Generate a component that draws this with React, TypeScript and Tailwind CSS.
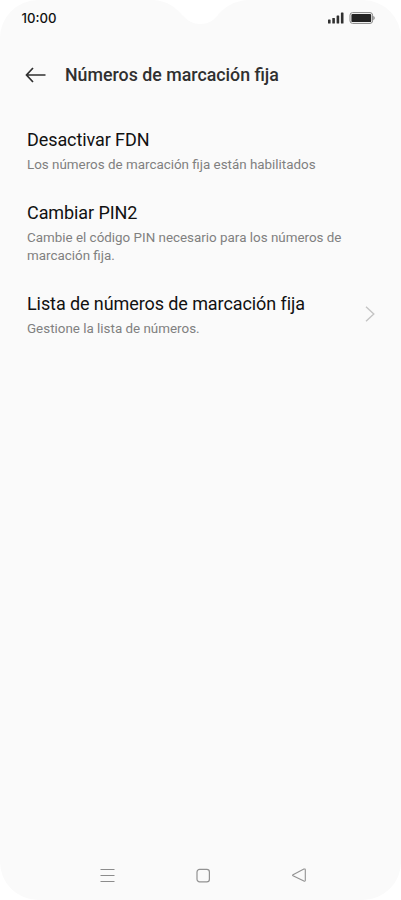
interface Setting {
  title: string;
  description: string;
  hasArrow?: boolean;
}

const settings: Setting[] = [
  {
    title: "Desactivar FDN",
    description: "Los números de marcación fija están habilitados",
  },
  {
    title: "Cambiar PIN2",
    description: "Cambie el código PIN necesario para los números de marcación fija.",
  },
  {
    title: "Lista de números de marcación fija",
    description: "Gestione la lista de números.",
    hasArrow: true,
  },
];

const StatusBar = () => (
  <div className="flex h-9 items-center justify-between pl-[21.5px] pr-[26px]">
    <span className="font-[Inter,sans-serif] text-[13.2px] leading-4 font-medium text-[#111]">10:00</span>
    <div className="flex items-center gap-[5px]">
      <svg width="17" height="12" viewBox="0 0 17 12" fill="#303030">
        <rect x="1" y="7.5" width="2.6" height="4" rx="0.6" />
        <rect x="5.3" y="6" width="2.6" height="5.5" rx="0.6" />
        <rect x="9.6" y="3.4" width="2.6" height="8.1" rx="0.6" />
        <rect x="13.9" y="0.5" width="2.6" height="11" rx="0.6" />
      </svg>
      <svg width="26" height="12" viewBox="0 0 26 12" fill="none">
        <rect x="1" y="0.6" width="22.6" height="10.8" rx="2.6" stroke="#858585" />
        <rect x="2.4" y="1.9" width="19.8" height="8.2" rx="1.2" fill="#222" />
        <path d="M24.3 4c.9 .3 1.4 1 1.4 2s-.5 1.7-1.4 2z" fill="#858585" />
      </svg>
    </div>
  </div>
);

// White cut-out for the front camera
const Notch = () => (
  <svg className="absolute top-0 left-[150px]" width="100" height="25" viewBox="0 0 100 25" fill="#fff">
    <path d="M3 0C18 1 25 7 32 15C38 21 43 24 50 24C58 24 63 21 68 15C75 7 83 1 98 0Z" />
  </svg>
);

const SettingRow = ({ title, description, hasArrow }: Setting) => (
  <button className="flex w-full items-center justify-between pr-[25px] pl-[27px] text-left">
    <div className="w-[320px]">
      <h2 className="text-[18px] leading-6 tracking-[-0.09px] text-[#111]">{title}</h2>
      <p className="mt-1 text-[13.4px] leading-[18px] text-[#808080]">{description}</p>
    </div>
    {hasArrow && (
      <svg width="11" height="18" viewBox="0 0 11 18" fill="none" stroke="#c4c4c4" strokeWidth="1.4">
        <path d="M1 0.8L8.8 8L1 15.2" />
      </svg>
    )}
  </button>
);

const NavigationBar = () => (
  <nav className="flex h-[50px] items-center justify-between pr-[94px] pl-[99px]">
    <svg width="16" height="16" viewBox="0 0 16 16" stroke="#8c8c8c" strokeWidth="1.1">
      <path d="M1.500 2.5H15.5M1.500 8.5H15.5M1.500 14.5H15.5" />
    </svg>
    <svg width="16" height="16" viewBox="0 0 16 16" fill="none" stroke="#929292" strokeWidth="1.2">
      <rect x="2" y="2.4" width="12.4" height="12.4" rx="2.6" />
    </svg>
    <svg width="16" height="16" viewBox="0 0 16 16" fill="none" stroke="#929292" strokeWidth="1.1">
      <path d="M2 7.7L12.9 2.1Q14.3 1.6 14.3 3V13.2Q14.3 14.6 12.9 14L2 8.7Q1.1 8.2 2 7.7Z" />
    </svg>
  </nav>
);

const App = () => {
  return (
    <div className="h-[900px] w-[401px] bg-white font-[Roboto,sans-serif]">
      <div className="relative flex h-full flex-col overflow-hidden rounded-[38px] bg-[#fafafa]">
        <Notch />
        <StatusBar />
        <header className="mt-[23px] flex h-8 items-center gap-[18px] pl-[25px]">
          <svg width="22" height="16" viewBox="0 0 22 16" fill="none" stroke="#303030" strokeWidth="1.7">
            <path d="M8 1L1.5 8L8 15M1.5 8H20.5" />
          </svg>
          <h1 className="text-[17.8px] leading-6 font-medium text-[#303030]">Números de marcación fija</h1>
        </header>
        <main className="mt-[37px] flex flex-1 flex-col gap-[27px]">
          {settings.map((setting) => (
            <SettingRow key={setting.title} {...setting} />
          ))}
        </main>
        <NavigationBar />
      </div>
    </div>
  );
};

export default App;
